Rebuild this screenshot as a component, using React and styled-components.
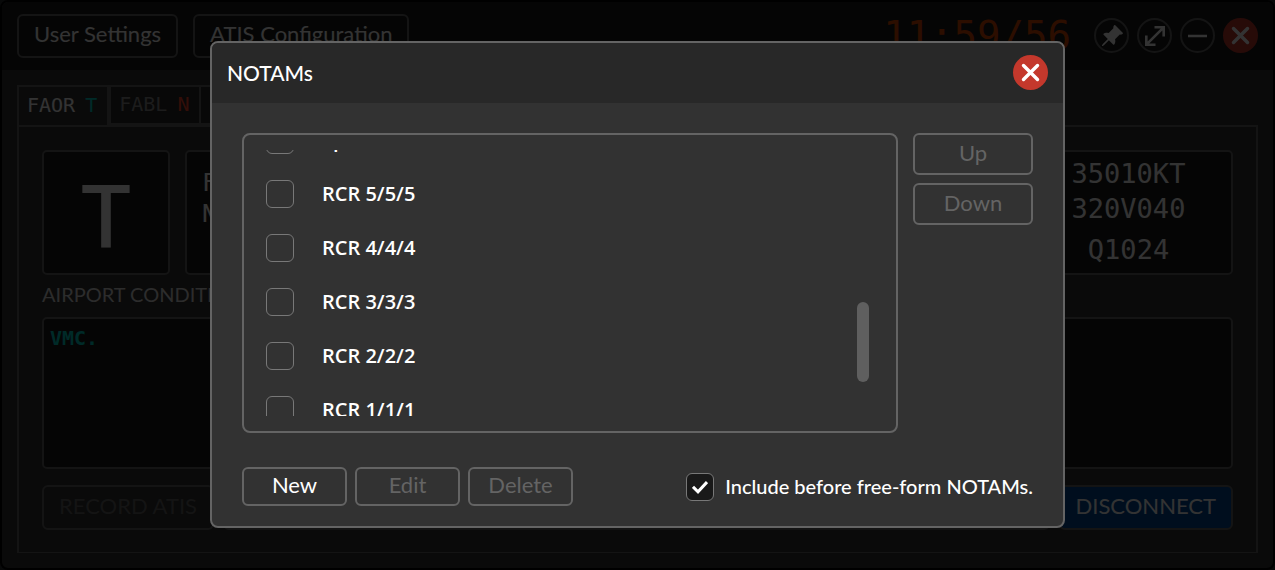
import React, { useEffect, useRef, useState } from 'react';
import styled, { createGlobalStyle } from 'styled-components';
import { BsPinAngleFill } from 'react-icons/bs';

const GlobalStyle = createGlobalStyle`
  * {
    box-sizing: border-box;
  }

  body {
    margin: 0;
    background: #2b2d31;
    color: #ffffff;
    font-family: Lato, "Noto Sans", sans-serif;
    font-size: 20px;
    line-height: 24px;
  }

  button, input, textarea {
    font: inherit;
    color: inherit;
  }
`

const Window = styled.main`
  display: flex;
  flex-direction: column;
  min-height: 100vh;
  border: 2px solid #000000;
  border-radius: 8px;
  background-color: #323232;
  overflow: hidden;
`

const TitleBar = styled.header`
  display: flex;
  align-items: center;
  gap: 15px;
  height: 68px;
  padding: 0 15px 1px;
  background-color: #1c1c1c;
`

const Clock = styled.time`
  margin-left: auto;
  margin-right: 8px;
  color: #dc4600;
  font-family: "DejaVu Sans Mono", monospace;
  font-size: 39px;
  line-height: 40px;
`

const WindowControls = styled.div`
  display: flex;
  gap: 8px;
`

const RoundButton = styled.button`
  display: flex;
  align-items: center;
  justify-content: center;
  width: 35px;
  height: 35px;
  padding: 0;
  border: ${(props) => (props.$danger ? 'none' : '2px solid #646464')};
  border-radius: 50%;
  background-color: ${(props) => (props.$danger ? '#c4382c' : 'transparent')};
`

const Button = styled.button`
  height: ${(props) => props.$height || 44}px;
  min-width: ${(props) => props.$width || 0}px;
  padding: 0 15px 3px;
  border: 2px solid #646464;
  border-radius: 6px;
  background-color: ${(props) => (props.$primary ? '#004696' : 'transparent')};
  font-size: 22px;
  white-space: nowrap;

  &:disabled {
    color: #646464;
  }
`

const Station = styled.section`
  display: flex;
  flex-direction: column;
  flex: 1;
  padding: 15px;
`

const Tabs = styled.nav`
  display: flex;
`

const Tab = styled.button`
  display: flex;
  align-items: center;
  gap: 10px;
  height: 40px;
  padding: 0 10px 2px 8px;
  border: 2px solid #646464;
  border-bottom-width: ${(props) => (props.$active ? 0 : 2)}px;
  border-right-width: ${(props) => (props.$active ? 2 : 0)}px;
  background-color: ${(props) => (props.$active ? 'transparent' : '#282828')};
  color: ${(props) => (props.$active ? '#ffffff' : '#8c8c8c')};
  font-family: "DejaVu Sans Mono", monospace;
`

const TabLetter = styled.span`
  color: ${(props) => (props.$online ? '#00d2c8' : '#ff4628')};
`

const Panel = styled.div`
  display: flex;
  flex-direction: column;
  gap: 12px;
  flex: 1;
  padding: 23px 23px 22px;
  border: 2px solid #646464;
  border-bottom-width: 1px;
`

const Summary = styled.div`
  display: flex;
  gap: 15px;
  height: 125px;
`

const Box = styled.div`
  border: 2px solid #646464;
  border-radius: 5px;
  background-color: #191919;
  font-family: "DejaVu Sans Mono", monospace;
`

const Letter = styled(Box)`
  display: flex;
  align-items: center;
  justify-content: center;
  width: 128px;
  font-family: "Noto Sans", sans-serif;
  font-size: 88px;
  font-weight: 500;
`

const Metar = styled(Box)`
  flex: 1;
  padding: 15px;
  font-size: 25px;
  line-height: 31px;
`

const Weather = styled(Box)`
  display: flex;
  flex-direction: column;
  align-items: center;
  width: 209px;
  padding: 4px 0;
  font-size: 27px;
  line-height: 35px;
`

const Pressure = styled.div`
  margin-top: 6px;
`

const Texts = styled.div`
  display: flex;
  gap: 15px;
  flex: 1;
`

const TextField = styled.label`
  display: flex;
  flex-direction: column;
  gap: 15px;
  flex: 1;
  color: #dcdcdc;
  line-height: 15px;
`

const TextArea = styled.textarea`
  flex: 1;
  padding: 6px;
  border: 2px solid #646464;
  border-radius: 5px;
  background-color: #191919;
  color: #00d2c8;
  font-family: "DejaVu Sans Mono", monospace;
  font-weight: 700;
  line-height: 26px;
  resize: none;
`

const Actions = styled.div`
  display: flex;
  gap: 9px;
  margin-top: 4px;
`

const StatusText = styled.div`
  flex: 1;
  border: 2px solid #646464;
  border-radius: 6px;
`

const Overlay = styled.div`
  position: fixed;
  inset: 0;
  display: flex;
  align-items: center;
  justify-content: center;
  padding-bottom: 1px;
  background-color: rgba(0, 0, 0, 0.8);
`

const Dialog = styled.section`
  width: 90%;
  max-width: 855px;
  border: 2px solid #646464;
  border-radius: 8px;
  background-color: #323232;
  overflow: hidden;
`

const DialogHeader = styled.header`
  display: flex;
  align-items: center;
  justify-content: space-between;
  height: 60px;
  padding: 0 15px 1px;
  background-color: #282828;
`

const DialogTitle = styled.h1`
  margin: 0;
  font-size: 21px;
  font-weight: 500;
`

const DialogBody = styled.div`
  display: flex;
  flex-direction: column;
  gap: 34px;
  padding: 30px 30px 20px;
`

const ListArea = styled.div`
  display: flex;
  gap: 15px;
`

const ListFrame = styled.div`
  display: flex;
  flex: 1;
  height: 300px;
  padding: 15px 27px 15px 22px;
  border: 2px solid #646464;
  border-radius: 8px;
`

const List = styled.ul`
  flex: 1;
  margin: 0;
  padding: 0;
  list-style: none;
  overflow-y: auto;
  scrollbar-width: none;
`

const Track = styled.div`
  width: 12px;
`

const Thumb = styled.div`
  min-height: 80px;
  border-radius: 6px;
  background-color: #5f5f5f;
`

const Row = styled.li`
  display: flex;
  align-items: center;
  height: 54px;
`

const CheckLabel = styled.label`
  display: flex;
  align-items: center;
  gap: ${(props) => props.$gap}px;
  font-weight: 500;
`

const RowLabel = styled(CheckLabel)`
  font-family: "Open Sans", sans-serif;
  font-weight: 600;
`

const CheckText = styled.span`
  padding-bottom: 2px;
`

const CheckBox = styled.input`
  appearance: none;
  width: 28px;
  height: 28px;
  margin: 0;
  border: 1px solid #787878;
  border-radius: 6px;

  &:checked {
    background-color: #191919;
  }
`

const CheckWrap = styled.span`
  display: grid;
  place-items: center;

  > * {
    grid-area: 1 / 1;
  }

  > svg {
    pointer-events: none;
  }
`

const SideButtons = styled.div`
  display: flex;
  flex-direction: column;
  gap: 8px;
`

const Footer = styled.footer`
  display: flex;
  align-items: center;
  justify-content: space-between;
`

const ButtonRow = styled.div`
  display: flex;
  gap: 8px;
`

const CloseIcon = () => (
  <svg width="19" height="19" viewBox="0 0 19 19" stroke="#fff" strokeWidth="3.4" strokeLinecap="round">
    <path d="M2.5 2.5l14 14M16.5 2.5l-14 14" />
  </svg>
)

const ExpandIcon = () => (
  <svg width="20" height="20" viewBox="0 0 20 20" fill="none" stroke="#fff" strokeWidth="2.6">
    <path d="M9.5 1.3h9.2v9.2M18.7 1.3L1.3 18.7M1.3 9.5v9.2h9.2" />
  </svg>
)

const MinimizeIcon = () => (
  <svg width="19" height="4" viewBox="0 0 19 4" stroke="#fff" strokeWidth="2.4">
    <path d="M0 2h19" />
  </svg>
)

const CheckIcon = () => (
  <svg width="16" height="14" viewBox="0 0 16 14" fill="none" stroke="#fff" strokeWidth="3">
    <path d="M1 6.8l5 5L15 2" />
  </svg>
)

const notams = [
  'TWY A closed',
  'TWY B closed',
  'Bird activity',
  'Wildlife in vicinity',
  'ILS 03R out of service',
  'VOR out of service',
  'PAPI out of service',
  'Work in progress',
  'Low visibility procedures',
  'Special VFR',
  'RCR 5/5/5',
  'RCR 4/4/4',
  'RCR 3/3/3',
  'RCR 2/2/2',
  'RCR 1/1/1',
  'RCR 0/0/0',
  'RWY surface wet',
];

const NotamList = () => {
  const listRef = useRef(null);
  const [thumb, setThumb] = useState({ height: 0, marginTop: 0 });

  const updateThumb = () => {
    const { clientHeight, scrollHeight, scrollTop } = listRef.current;
    const ratio = clientHeight / scrollHeight;
    setThumb({
      height: Math.round(clientHeight * ratio),
      marginTop: Math.round(scrollTop * ratio),
    });
  }

  useEffect(() => {
    listRef.current.scrollTop = 523;
    updateThumb();
  }, []);

  return (
    <ListFrame>
      <List ref={listRef} onScroll={updateThumb}>
        {notams.map((notam) => (
          <Row key={notam}>
            <RowLabel $gap={28}>
              <CheckBox type='checkbox' />
              {notam}
            </RowLabel>
          </Row>
        ))}
      </List>
      <Track>
        <Thumb style={thumb} />
      </Track>
    </ListFrame>
  )
}

const NotamDialog = () => {
  const [include, setInclude] = useState(true);

  return (
    <Overlay>
      <Dialog role='dialog' aria-labelledby='notams-title'>
        <DialogHeader>
          <DialogTitle id='notams-title'>NOTAMs</DialogTitle>
          <RoundButton $danger aria-label='Close'><CloseIcon /></RoundButton>
        </DialogHeader>
        <DialogBody>
          <ListArea>
            <NotamList />
            <SideButtons>
              <Button $height={42} $width={120} disabled>Up</Button>
              <Button $height={42} $width={120} disabled>Down</Button>
            </SideButtons>
          </ListArea>
          <Footer>
            <ButtonRow>
              <Button $height={39} $width={105}>New</Button>
              <Button $height={39} $width={105} disabled>Edit</Button>
              <Button $height={39} $width={105} disabled>Delete</Button>
            </ButtonRow>
            <CheckLabel $gap={11}>
              <CheckWrap>
                <CheckBox
                  type='checkbox'
                  checked={include}
                  onChange={(e) => setInclude(e.target.checked)} />
                {include && <CheckIcon />}
              </CheckWrap>
              <CheckText>Include before free-form NOTAMs.</CheckText>
            </CheckLabel>
          </Footer>
        </DialogBody>
      </Dialog>
    </Overlay>
  )
}

const App = () => {
  return (
    <>
      <GlobalStyle />
      <Window>
        <TitleBar>
          <Button>User Settings</Button>
          <Button>ATIS Configuration</Button>
          <Clock>11:59/56</Clock>
          <WindowControls>
            <RoundButton aria-label='Pin'><BsPinAngleFill size={24} /></RoundButton>
            <RoundButton aria-label='Compact view'><ExpandIcon /></RoundButton>
            <RoundButton aria-label='Minimize'><MinimizeIcon /></RoundButton>
            <RoundButton $danger aria-label='Quit'><CloseIcon /></RoundButton>
          </WindowControls>
        </TitleBar>
        <Station>
          <Tabs>
            <Tab $active>FAOR <TabLetter $online>T</TabLetter></Tab>
            <Tab>FABL <TabLetter>N</TabLetter></Tab>
            <Tab>FACT <TabLetter>A</TabLetter></Tab>
          </Tabs>
          <Panel>
            <Summary>
              <Letter>T</Letter>
              <Metar>
                <div>FAOR</div>
                <div>NOSIG</div>
              </Metar>
              <Weather>
                <div>35010KT</div>
                <div>320V040</div>
                <Pressure>Q1024</Pressure>
              </Weather>
            </Summary>
            <Texts>
              <TextField>
                AIRPORT CONDITIONS
                <TextArea defaultValue='VMC.' />
              </TextField>
              <TextField>
                NOTAMS
                <TextArea />
              </TextField>
            </Texts>
            <Actions>
              <Button $height={45} disabled>RECORD ATIS</Button>
              <StatusText />
              <Button $height={45} $primary>DISCONNECT</Button>
            </Actions>
          </Panel>
        </Station>
      </Window>
      <NotamDialog />
    </>
  )
}

export default App;
